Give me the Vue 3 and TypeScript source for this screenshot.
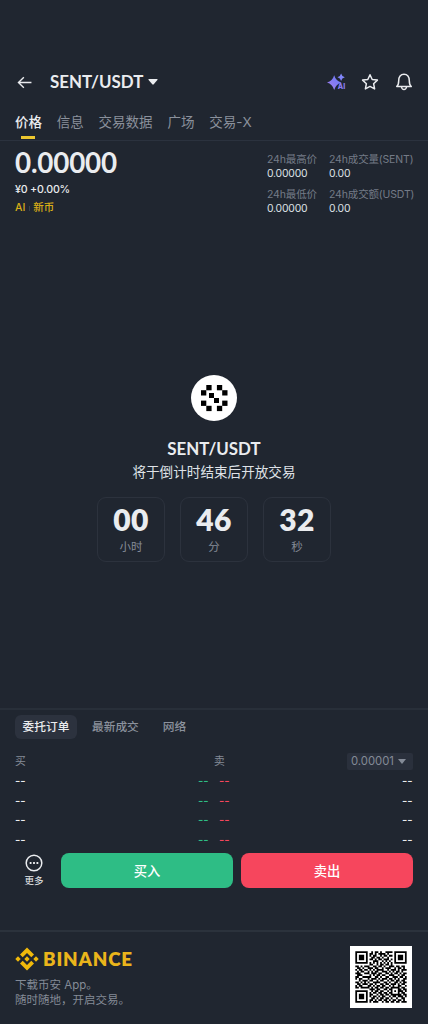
<script setup lang="ts">
interface Countdown { value: string; unit: string }

const tabs: string[] = ['价格', '信息', '交易数据', '广场', '交易-X']
const stats = [
  { label: '24h最高价', value: '0.00000' },
  { label: '24h成交量(SENT)', value: '0.00' },
  { label: '24h最低价', value: '0.00000' },
  { label: '24h成交额(USDT)', value: '0.00' },
]
const countdown: Countdown[] = [
  { value: '00', unit: '小时' },
  { value: '46', unit: '分' },
  { value: '32', unit: '秒' },
]
const tokenCells: number[][] = [[1, 0], [0, 1], [3, 0], [4, 1], [0, 3], [1, 4], [4, 3], [3, 4]]

const qrRows: string[] = [
  '11111110010110100111101111111',
  '10000010110101111010001000001',
  '10111010101100101101101011101',
  '10111010011011010010001011101',
  '10111010110101101110101011101',
  '10000010001110010101001000001',
  '11111110101010101010101111111',
  '00000000110010110110100000000',
  '11010111001101101001110110110',
  '01101001110110010111001011010',
  '10110110101011110010111010111',
  '01011001010110011101010110100',
  '11100111011101100110101101011',
  '01110000101011011001110010110',
  '11001111100110100110011101101',
  '10110001011101011101101010011',
  '00101110110010110010110110110',
  '11010101001111001101001101011',
  '01101110110100110110111010110',
  '10110001101011011001010011001',
  '11011111010110110110111110110',
  '00000000111011001101100011011',
  '11111110010110110010101011101',
  '10000010101101101101100010110',
  '10111010110010110110111111011',
  '10111010101101011001011011101',
  '10111010011010110110100100110',
  '10000010110101101101011011010',
  '11111110101110010110110110111',
]
const qrPath: string = qrRows
  .flatMap((row, y) => [...row].map((cell, x) => (cell === '1' ? `M${x} ${y}h1v1h-1z` : '')))
  .join('')
</script>

<template>
  <main class="screen">
    <header class="header">
      <svg class="back" viewBox="0 0 16 14"><path d="M15.5 7H1.8M7.3 1.3 1.5 7l5.8 5.7" /></svg>
      <h1>SENT/USDT</h1>
      <svg class="caret" viewBox="0 0 10 6"><path d="M1 0h8q1 .2.4 1L5.7 5.3q-.7.7-1.4 0L.6 1Q0 .2 1 0z" /></svg>
      <svg class="ai" viewBox="0 0 20 18">
        <defs><linearGradient id="spark" x1="0" y1="1" x2="1" y2="0"><stop stop-color="#a77eea" /><stop offset=".6" stop-color="#777af5" /><stop offset="1" stop-color="#8b91ff" /></linearGradient></defs>
        <path fill="url(#spark)" d="M7.2 2.2Q8.8 7.9 14.6 9.6 8.8 11.3 7.2 17 5.5 11.3 0 9.6 5.5 7.9 7.2 2.2zM14.1.5q.7 3 3.7 3.8-3 .7-3.7 3.7-.7-3-3.6-3.7Q13.4 3.5 14.1.5z" />
        <text x="10.8" y="16.3">AI</text>
      </svg>
      <svg class="star" viewBox="0 0 18 18"><path d="m9 1.8 2.2 4.7 5.2.6-3.8 3.6 1 5.2L9 13.4l-4.6 2.5 1-5.2L1.6 7.1l5.2-.6z" /></svg>
      <svg class="bell" viewBox="0 0 18 18"><path d="M1.7 13.5c1.6-1.2 2-3 2-5.8C3.7 3.9 5.6 1.3 9 1.3s5.3 2.6 5.3 6.4c0 2.8.4 4.6 2 5.8z" /><path d="M6.5 14q.4 2.5 2.5 2.5t2.5-2.5" /></svg>
    </header>

    <nav class="tabs"><span v-for="(tab, i) in tabs" :key="tab" :class="{ active: i === 0 }">{{ tab }}</span></nav>

    <section class="ticker">
      <div class="quote">
        <div class="price">0.00000</div>
        <div class="change">¥0 +0.00%</div>
        <div class="tags"><span>AI</span><i></i><span>新币</span></div>
      </div>
      <dl class="stats"><div v-for="s in stats" :key="s.label"><dt>{{ s.label }}</dt><dd>{{ s.value }}</dd></div></dl>
    </section>

    <section class="launch">
      <svg class="token" viewBox="0 0 46 46">
        <circle cx="23" cy="23" r="23" fill="#fff" />
        <rect v-for="(c, i) in tokenCells" :key="i" :x="10 + c[0] * 5.3" :y="10 + c[1] * 5.2" width="5.3" height="5.3" />
        <path d="M18 18h5v5h5v5h-5v-5h-5z" />
      </svg>
      <h2>SENT/USDT</h2>
      <p>将于倒计时结束后开放交易</p>
      <div class="countdown"><div v-for="c in countdown" :key="c.unit" class="time"><strong>{{ c.value }}</strong><span>{{ c.unit }}</span></div></div>
    </section>

    <section class="book">
      <nav class="book-tabs"><span class="selected">委托订单</span><span>最新成交</span><span>网络</span></nav>
      <div class="book-head"><span>买</span><span>卖</span><div class="step">0.00001<svg viewBox="0 0 8 5"><path d="M0 0h8L4 5z" /></svg></div></div>
      <div v-for="row in 4" :key="row" class="order"><span>--</span><span class="bid">--</span><span class="ask">--</span><span>--</span></div>
    </section>

    <div class="actions">
      <div class="more">
        <svg viewBox="0 0 18 18"><circle cx="9" cy="9" r="7.8" /><path d="M4.7 8.1h1.8v1.8H4.7zM8.1 8.1h1.8v1.8H8.1zM11.5 8.1h1.8v1.8h-1.8z" /></svg>
        <span>更多</span>
      </div>
      <button class="buy">买入</button><button class="sell">卖出</button>
    </div>

    <footer class="footer">
      <div class="promo">
        <div class="brand">
          <svg viewBox="0 0 24 24"><path d="m12 .5 7 7-2.7 2.7L12 5.9l-4.3 4.3L5 7.5zM3 9.3 5.7 12 3 14.7.3 12zm9 0 2.7 2.7-2.7 2.7L9.3 12zm9 0 2.7 2.7-2.7 2.7-2.7-2.7zM7.7 13.8l4.3 4.3 4.3-4.3 2.7 2.7-7 7-7-7z" /></svg>
          <span>BINANCE</span>
        </div>
        <p>下载币安 App。<br>随时随地，开启交易。</p>
      </div>
      <svg class="qr" viewBox="-3 -3 35 35" shape-rendering="geometricPrecision"><path fill="#fff" d="M-3-3h35v35H-3z" /><path :d="qrPath" /></svg>
    </footer>
  </main>
</template>

<style>
body { margin: 0; background: #202630; }
</style>
<style scoped>
* { box-sizing: border-box; }
.screen { width: 428px; height: 1024px; padding-top: 64px; overflow: hidden; background: #202630; color: #eaecef; font-family: Inter, "Noto Sans CJK SC", sans-serif; }
h1, h2, p, dl, dd { margin: 0; }
svg { display: block; flex: none; }
.header { height: 36px; padding: 0 15px 0 17px; display: flex; align-items: center; }
.back { width: 15px; height: 13px; fill: none; stroke: #eaecef; stroke-width: 1.5; }
h1, h2 { font-family: Lato, sans-serif; font-size: 16.9px; font-weight: 700; letter-spacing: 0; white-space: nowrap; }
h1 { margin-left: 18px; width: 94px; line-height: 24px; }
.caret { width: 10px; height: 6px; margin-left: 4px; fill: #eaecef; }
.ai { width: 20px; height: 18px; margin-left: auto; }
.ai text { fill: #8b7cf0; font: 800 7px Inter, sans-serif; }
.star, .bell { width: 18px; height: 18px; fill: none; stroke: #eaecef; stroke-width: 1.5; stroke-linejoin: round; }
.star { margin-left: 14px; }
.bell { margin-left: 16px; }
.tabs { height: 41px; padding: 9px 15px 0; display: flex; gap: 14.8px; border-bottom: 1px solid #2b323e; color: #8b919c; font-size: 13.5px; line-height: 27px; white-space: nowrap; }
.tabs .active { color: #eaecef; font-weight: 500; position: relative; }
.tabs .active::after { content: ""; position: absolute; width: 14px; height: 3px; left: 6px; bottom: 1px; background: #edc72f; }
.ticker { height: 234px; padding: 8px 14px 0 15px; display: flex; justify-content: space-between; }
.price { height: 30px; font-family: Lato, sans-serif; font-size: 27.8px; line-height: 28px; font-weight: 700; letter-spacing: -.2px; }
.change { height: 20px; font-size: 10.7px; line-height: 22px; font-weight: 500; letter-spacing: -.2px; }
.tags { display: flex; align-items: center; font-size: 10.5px; line-height: 18px; font-weight: 500; color: #d9ae16; }
.tags i { width: 1px; height: 5px; margin: 0 3.5px; background: #39404b; }
.stats { width: 147px; padding-top: 4px; display: grid; grid-template-columns: 62px 85px; grid-template-rows: 35px 35px; white-space: nowrap; }
.stats dt { color: #747b87; font-size: 10.5px; line-height: 14px; letter-spacing: -.15px; }
.stats dd { font-size: 10.4px; line-height: 14px; color: #dde0e5; letter-spacing: -.2px; }
.launch { height: 333px; display: flex; flex-direction: column; align-items: center; }
.token { width: 46px; height: 46px; }
h2 { margin-top: 16px; line-height: 23px; }
.launch p { font-size: 13.6px; line-height: 24px; color: #dfe2e7; }
.countdown { display: flex; gap: 15px; margin-top: 13px; }
.time { width: 68px; height: 65px; border: 1px solid #2c323d; border-radius: 9px; display: flex; flex-direction: column; align-items: center; padding-top: 5px; }
.time strong { font-family: Lato, sans-serif; font-size: 30px; line-height: 32px; font-weight: 800; letter-spacing: .4px; }
.time span { font-size: 11.5px; line-height: 24px; color: #848b97; }
.book { height: 141px; padding: 5px 15px 0; border-top: 2px solid #282f39; }
.book-tabs { display: flex; height: 24px; font-size: 11.7px; line-height: 25px; font-weight: 500; color: #8b919c; }
.book-tabs span { margin-right: 24px; }
.book-tabs .selected { width: 62px; margin-right: 15px; text-align: center; border-radius: 6px; background: #2c323e; color: #eaecef; }
.book-head { display: grid; grid-template-columns: 199px 1fr 66px; height: 16px; margin-top: 14px; font-size: 10.8px; line-height: 17px; color: #848b97; }
.step { display: flex; align-items: center; padding-left: 4px; font-size: 11.3px; border-radius: 2px; background: #2a303c; }
.step svg { width: 8px; height: 5px; margin-left: 4px; fill: #848b97; }
.order { height: 19.5px; display: grid; grid-template-columns: 183px 21px 1fr 11px; font-size: 11.5px; line-height: 24px; font-weight: 500; }
.bid { color: #2ebd85; }
.ask { color: #f6465d; }
.actions { height: 81px; padding: 4px 15px 0; display: flex; }
.more { width: 38px; margin-right: 8px; padding-top: 1px; display: flex; flex-direction: column; align-items: center; font-size: 9.5px; line-height: 17px; }
.more svg { width: 18px; height: 18px; fill: #eaecef; }
.more circle { fill: none; stroke: #eaecef; stroke-width: 1.5; }
button { width: 172px; height: 35px; padding: 0 0 1px; border: 0; border-radius: 8px; color: #fff; font: 500 13.3px Inter, "Noto Sans CJK SC", sans-serif; }
.buy { background: #2ebd85; margin-right: 8px; }
.sell { background: #f6465d; }
.footer { height: 94px; border-top: 2px solid #2b323c; padding: 14px 16px 0 15px; display: flex; justify-content: space-between; }
.brand { height: 25px; display: flex; align-items: center; color: #eab51b; font-family: Lato, sans-serif; font-size: 18.8px; line-height: 25px; font-weight: 800; letter-spacing: .85px; }
.brand svg { width: 24px; height: 24px; margin-right: 4px; fill: #f0b90b; }
.promo p { margin-top: 7px; font-size: 11.5px; line-height: 15px; color: #848b97; white-space: nowrap; }
.qr { width: 62px; height: 62px; }
</style>
